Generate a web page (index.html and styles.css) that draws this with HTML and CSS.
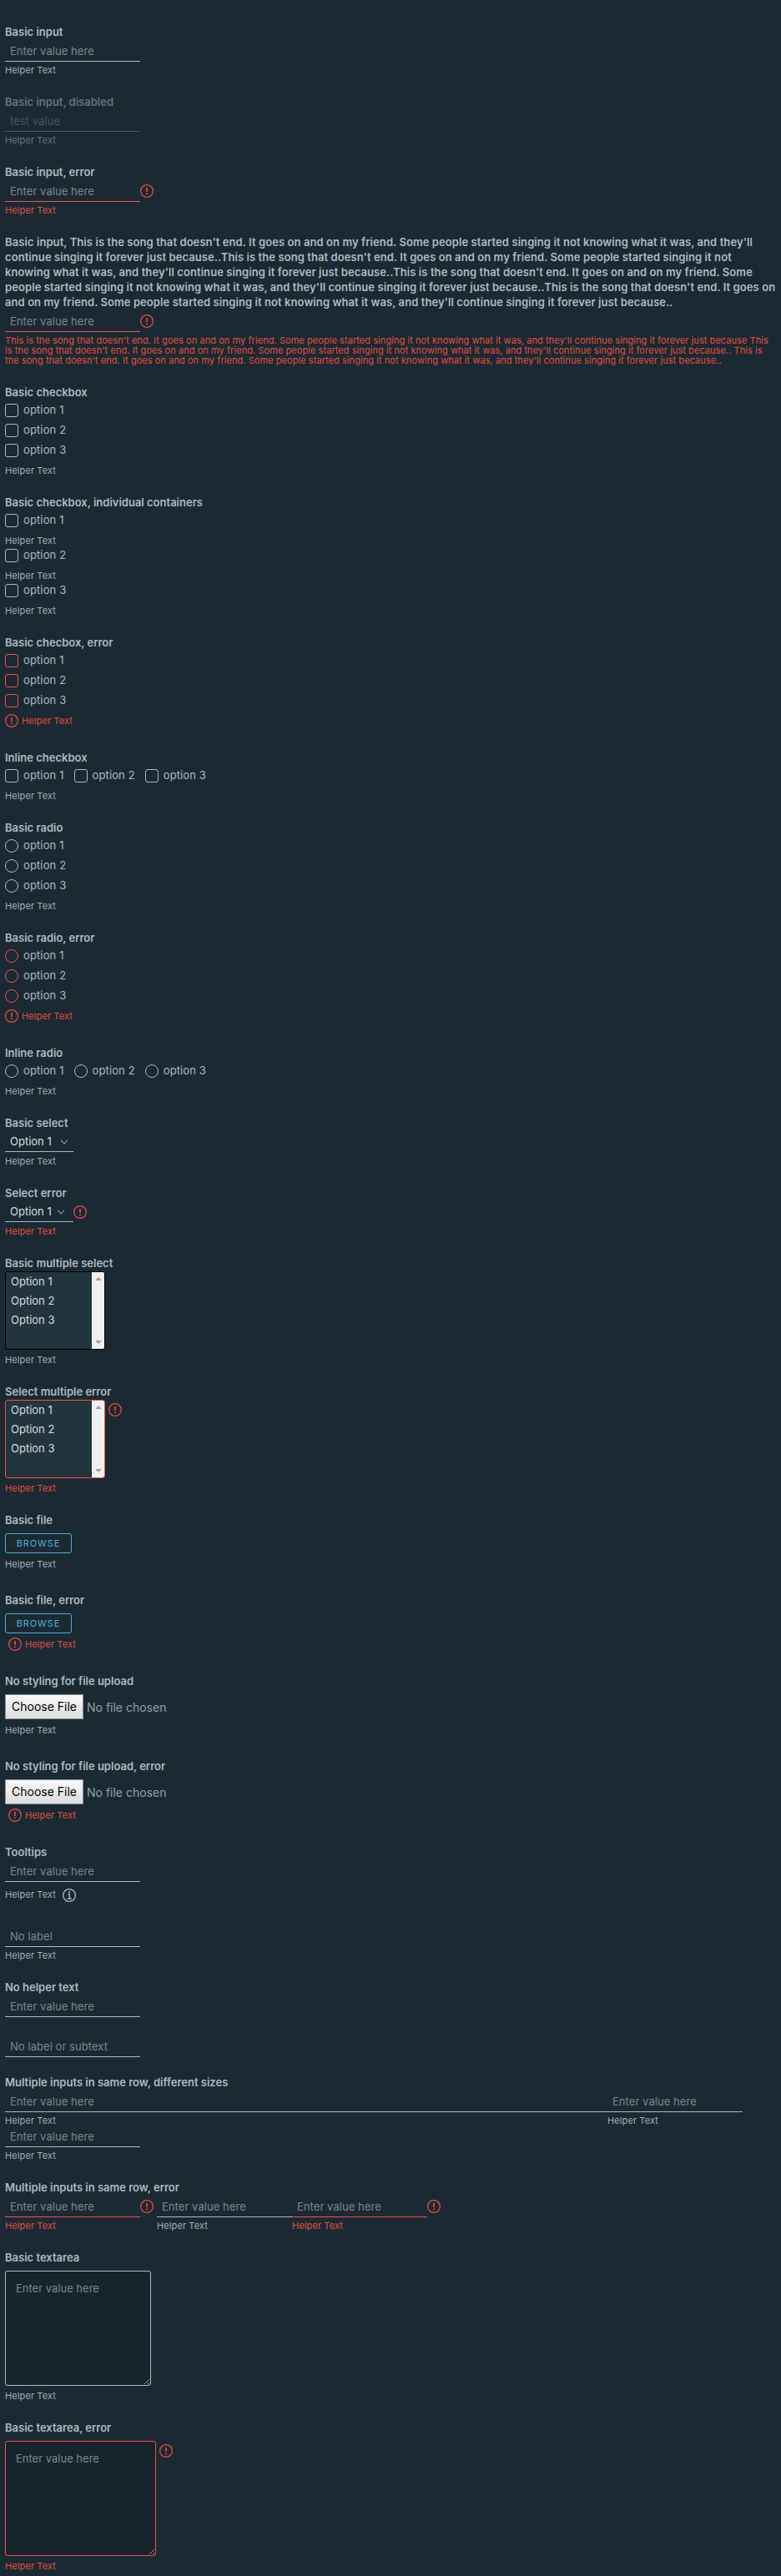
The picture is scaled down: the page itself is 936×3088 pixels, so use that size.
FILE: index.html
```html
<!DOCTYPE html>
<html lang="en">
<head>
<meta charset="utf-8">
<title>Forms</title>
<link rel="stylesheet" href="styles.css">
</head>
<body>
<svg width="0" height="0" class="defs" aria-hidden="true">
  <symbol id="err" viewBox="0 0 16 16"><circle cx="8" cy="8" r="7.35" fill="none" stroke="currentColor" stroke-width="1.3"/><path d="M8 4v5.1M8 10.6v1.6" stroke="currentColor" stroke-width="1.7" fill="none"/></symbol>
  <symbol id="info" viewBox="0 0 16 16"><circle cx="8" cy="8" r="7.35" fill="none" stroke="currentColor" stroke-width="1.3"/><path d="M6.2 6.9h2.2v5M5.7 12h5" stroke="currentColor" stroke-width="1.3" fill="none"/><circle cx="8" cy="4.3" r="1.1" fill="currentColor"/></symbol>
  <symbol id="caret" viewBox="0 0 10 6"><path d="M1 .8l4 4 4-4" stroke="currentColor" stroke-width="1.2" fill="none"/></symbol>
</svg>
<form class="form">
  <section class="group">
    <label class="label">Basic input</label>
    <div class="control"><input class="input" placeholder="Enter value here"></div>
    <div class="helper">Helper Text</div>
  </section>
  <section class="group disabled">
    <label class="label">Basic input, disabled</label>
    <div class="control"><input class="input" value="test value" disabled></div>
    <div class="helper">Helper Text</div>
  </section>
  <section class="group error">
    <label class="label">Basic input, error</label>
    <div class="control"><input class="input" placeholder="Enter value here"><svg class="icon"><use href="#err"/></svg></div>
    <div class="helper">Helper Text</div>
  </section>
  <section class="group error">
    <label class="label long">
      <span>Basic input, This is the song that doesn't end. It goes on and on my friend. Some people started singing it not knowing what it was, and they'll</span>
      <span>continue singing it forever just because..This is the song that doesn't end. It goes on and on my friend. Some people started singing it not</span>
      <span>knowing what it was, and they'll continue singing it forever just because..This is the song that doesn't end. It goes on and on my friend. Some</span>
      <span>people started singing it not knowing what it was, and they'll continue singing it forever just because..This is the song that doesn't end. It goes on</span>
      <span>and on my friend. Some people started singing it not knowing what it was, and they'll continue singing it forever just because..</span>
    </label>
    <div class="control"><input class="input" placeholder="Enter value here"><svg class="icon"><use href="#err"/></svg></div>
    <div class="helper long">
      <span>This is the song that doesn't end. It goes on and on my friend. Some people started singing it not knowing what it was, and they'll continue singing it forever just because This</span>
      <span>is the song that doesn't end. It goes on and on my friend. Some people started singing it not knowing what it was, and they'll continue singing it forever just because.. This is</span>
      <span>the song that doesn't end. It goes on and on my friend. Some people started singing it not knowing what it was, and they'll continue singing it forever just because..</span>
    </div>
  </section>

  <section class="group">
    <div class="label">Basic checkbox</div>
    <div class="options">
      <label class="option"><i class="box"></i>option 1</label>
      <label class="option"><i class="box"></i>option 2</label>
      <label class="option"><i class="box"></i>option 3</label>
    </div>
    <div class="helper">Helper Text</div>
  </section>
  <section class="group">
    <div class="label">Basic checkbox, individual containers</div>
    <div class="options"><label class="option"><i class="box"></i>option 1</label></div>
    <div class="helper">Helper Text</div>
    <div class="options"><label class="option"><i class="box"></i>option 2</label></div>
    <div class="helper">Helper Text</div>
    <div class="options"><label class="option"><i class="box"></i>option 3</label></div>
    <div class="helper">Helper Text</div>
  </section>
  <section class="group error">
    <div class="label">Basic checbox, error</div>
    <div class="options">
      <label class="option"><i class="box"></i>option 1</label>
      <label class="option"><i class="box"></i>option 2</label>
      <label class="option"><i class="box"></i>option 3</label>
    </div>
    <div class="helper with-icon"><svg class="icon"><use href="#err"/></svg>Helper Text</div>
  </section>
  <section class="group">
    <div class="label">Inline checkbox</div>
    <div class="options inline">
      <label class="option"><i class="box"></i>option 1</label>
      <label class="option"><i class="box"></i>option 2</label>
      <label class="option"><i class="box"></i>option 3</label>
    </div>
    <div class="helper">Helper Text</div>
  </section>
  <section class="group">
    <div class="label">Basic radio</div>
    <div class="options">
      <label class="option"><i class="box radio"></i>option 1</label>
      <label class="option"><i class="box radio"></i>option 2</label>
      <label class="option"><i class="box radio"></i>option 3</label>
    </div>
    <div class="helper">Helper Text</div>
  </section>
  <section class="group error">
    <div class="label">Basic radio, error</div>
    <div class="options">
      <label class="option"><i class="box radio"></i>option 1</label>
      <label class="option"><i class="box radio"></i>option 2</label>
      <label class="option"><i class="box radio"></i>option 3</label>
    </div>
    <div class="helper with-icon"><svg class="icon"><use href="#err"/></svg>Helper Text</div>
  </section>
  <section class="group">
    <div class="label">Inline radio</div>
    <div class="options inline">
      <label class="option"><i class="box radio"></i>option 1</label>
      <label class="option"><i class="box radio"></i>option 2</label>
      <label class="option"><i class="box radio"></i>option 3</label>
    </div>
    <div class="helper">Helper Text</div>
  </section>

  <section class="group">
    <div class="label">Basic select</div>
    <div class="select-row"><div class="select"><span>Option 1</span><svg class="caret"><use href="#caret"/></svg></div></div>
    <div class="helper after-select">Helper Text</div>
  </section>
  <section class="group error">
    <div class="label">Select error</div>
    <div class="select-row"><div class="select tight"><span>Option 1</span><svg class="caret"><use href="#caret"/></svg></div><svg class="icon"><use href="#err"/></svg></div>
    <div class="helper after-select">Helper Text</div>
  </section>
  <section class="group">
    <div class="label">Basic multiple select</div>
    <div class="multi-row">
      <div class="multi">
        <div class="multi-list"><span>Option 1</span><span>Option 2</span><span>Option 3</span></div>
        <div class="scroll"><i class="up"></i><i class="down"></i></div>
      </div>
    </div>
    <div class="helper after-box">Helper Text</div>
  </section>
  <section class="group error">
    <div class="label">Select multiple error</div>
    <div class="multi-row">
      <div class="multi">
        <div class="multi-list"><span>Option 1</span><span>Option 2</span><span>Option 3</span></div>
        <div class="scroll"><i class="up"></i><i class="down"></i></div>
      </div>
      <svg class="icon"><use href="#err"/></svg>
    </div>
    <div class="helper after-box">Helper Text</div>
  </section>

  <section class="group file">
    <div class="label">Basic file</div>
    <button type="button" class="browse">BROWSE</button>
    <div class="helper">Helper Text</div>
  </section>
  <section class="group file error">
    <div class="label">Basic file, error</div>
    <button type="button" class="browse">BROWSE</button>
    <div class="helper with-icon"><svg class="icon"><use href="#err"/></svg>Helper Text</div>
  </section>
  <section class="group file">
    <div class="label">No styling for file upload</div>
    <div class="native"><button type="button" class="choose">Choose File</button><span class="chosen">No file chosen</span></div>
    <div class="helper">Helper Text</div>
  </section>
  <section class="group file error">
    <div class="label">No styling for file upload, error</div>
    <div class="native"><button type="button" class="choose">Choose File</button><span class="chosen">No file chosen</span></div>
    <div class="helper with-icon"><svg class="icon"><use href="#err"/></svg>Helper Text</div>
  </section>

  <section class="group tooltip-group">
    <label class="label">Tooltips</label>
    <div class="control"><input class="input" placeholder="Enter value here"></div>
    <div class="helper-row"><span class="helper-text">Helper Text</span><svg class="icon"><use href="#info"/></svg></div>
  </section>
  <section class="group">
    <div class="control"><input class="input" placeholder="No label"></div>
    <div class="helper">Helper Text</div>
  </section>
  <section class="group">
    <label class="label">No helper text</label>
    <div class="control"><input class="input" placeholder="Enter value here"></div>
  </section>
  <section class="group no-label">
    <div class="control"><input class="input" placeholder="No label or subtext"></div>
  </section>
  <section class="group after-bare">
    <div class="label">Multiple inputs in same row, different sizes</div>
    <div class="row sizes">
      <div class="cell wide"><div class="control"><input class="input" placeholder="Enter value here"></div><div class="helper">Helper Text</div></div>
      <div class="cell"><div class="control"><input class="input" placeholder="Enter value here"></div><div class="helper">Helper Text</div></div>
      <div class="cell"><div class="control"><input class="input" placeholder="Enter value here"></div><div class="helper">Helper Text</div></div>
    </div>
  </section>
  <section class="group">
    <div class="label">Multiple inputs in same row, error</div>
    <div class="row">
      <div class="cell error spaced"><div class="control"><input class="input" placeholder="Enter value here"><svg class="icon"><use href="#err"/></svg></div><div class="helper">Helper Text</div></div>
      <div class="cell"><div class="control"><input class="input" placeholder="Enter value here"></div><div class="helper">Helper Text</div></div>
      <div class="cell error"><div class="control"><input class="input" placeholder="Enter value here"><svg class="icon"><use href="#err"/></svg></div><div class="helper">Helper Text</div></div>
    </div>
  </section>
  <section class="group">
    <label class="label">Basic textarea</label>
    <div class="area-row"><textarea class="area" placeholder="Enter value here"></textarea></div>
    <div class="helper after-box">Helper Text</div>
  </section>
  <section class="group error">
    <label class="label">Basic textarea, error</label>
    <div class="area-row"><textarea class="area" placeholder="Enter value here"></textarea><svg class="icon"><use href="#err"/></svg></div>
    <div class="helper after-box">Helper Text</div>
  </section>
</form>
</body>
</html>
```
FILE: styles.css
```css
* { box-sizing: border-box; }

body {
  margin: 0;
  padding: 6px;
  background: #1b2a32;
  color: #acbac3;
  font-family: Inter, "Open Sans", sans-serif;
  font-size: 13px;
}

.defs { position: absolute; }
.form { display: flex; flex-direction: column; }
.group { margin-top: 24px; }

.label {
  display: block;
  height: 18px;
  line-height: 16px;
  font-weight: 600;
  white-space: nowrap;
}
.label.long { height: 90px; line-height: 18px; letter-spacing: 0.08px; }
.label.long span, .helper.long span { display: block; white-space: nowrap; }
.label.long span { height: 18px; line-height: 16px; }

.control { display: flex; height: 24px; margin-top: 2px; }
.input {
  width: 162px;
  height: 24px;
  margin: 0;
  padding: 0 6px 2px;
  border: 0;
  border-bottom: 1px solid #acbac3;
  border-radius: 0;
  background: none;
  color: #acbac3;
  font: inherit;
  letter-spacing: 0.06px;
  outline: none;
}
::placeholder { color: #7b868c; opacity: 1; }

.helper {
  height: 12px;
  margin-top: 4px;
  line-height: 12px;
  font-size: 11px;
  letter-spacing: 0.1px;
  color: #a1afb7;
}
.helper.long { height: auto; letter-spacing: 0.06px; }
.icon { flex: none; display: block; width: 16px; height: 16px; color: #e24a44; }
.control .icon { margin-top: 3px; }

.error .input { border-color: #f54f47; }
.error .helper { color: #e24a44; }
.disabled .label, .disabled .helper { color: #64727a; }
.disabled .input { color: #46545b; border-color: #46545b; }

/* checkboxes and radios */
.options { display: flex; flex-direction: column; gap: 8px; padding-top: 4px; }
.options.inline { flex-direction: row; gap: 12px; }
.option {
  display: flex;
  height: 16px;
  gap: 6px;
  line-height: 15px;
  letter-spacing: 0.12px;
  white-space: nowrap;
}
.box { width: 16px; height: 16px; border: 1px solid #acbac3; border-radius: 3px; }
.radio { border-radius: 50%; }
.error .box { border-color: #f54f47; }
.options + .helper { margin-top: 10px; }
.helper.with-icon { display: flex; gap: 4px; height: 16px; line-height: 16px; }
.options + .helper.with-icon { margin: 8px 0 28px; }
.group:has(.options + .with-icon) + .group { margin-top: 0; }

/* selects */
.select-row { display: flex; height: 24px; margin-top: 1px; }
.select {
  display: flex;
  justify-content: space-between;
  width: 82px;
  padding: 0 6px;
  border-bottom: 1px solid #acbac3;
  color: #d5dde1;
  line-height: 23px;
}
.tight { padding-right: 10px; }
.caret { width: 10px; height: 6px; margin-top: 9px; color: #8d989e; }
.select-row .icon { margin-top: 4px; }
.helper.after-select { margin-top: 5px; }
.multi-row { display: flex; gap: 4px; }
.multi {
  display: flex;
  width: 120px;
  height: 94px;
  border: 1px solid #000;
  border-radius: 3px;
  background: #22343c;
  color: #d5dde1;
  overflow: hidden;
}
.multi-list { flex: 1; display: flex; flex-direction: column; padding-left: 6px; line-height: 23px; }
.scroll {
  display: flex;
  flex-direction: column;
  align-items: center;
  justify-content: space-between;
  width: 15px;
  padding: 6px 0;
  background: #f0f0f0;
}
.up, .down { border: 4px solid transparent; border-top-width: 0; border-bottom: 4px solid #a3a3a3; }
.down { border-top: 4px solid #a3a3a3; border-bottom-width: 0; }
.multi-row .icon, .area-row .icon { margin-top: 4px; }
.error .multi { border-color: #f54f47; }
.helper.after-box { margin-top: 6px; }

/* file inputs */
.browse {
  display: block;
  width: 80px;
  height: 24px;
  margin: 6px 0 0;
  padding: 0;
  border: 1px solid #49afd9;
  border-radius: 3px;
  background: none;
  color: #49afd9;
  font: 400 11px/22px Inter, sans-serif;
  letter-spacing: 0.9px;
}
.file .helper { margin: 7px 0 5px; }
.file .helper.with-icon { margin: 5px 0 4px 4px; }
.native { display: flex; align-items: center; gap: 4px; height: 30px; margin-top: 6px; }
.choose {
  width: 94px;
  height: 30px;
  padding: 0;
  border: 1px solid #8f8f8f;
  border-radius: 0;
  background: linear-gradient(#f8f8f8, #dddddd);
  color: #000;
  font: 14px/28px Inter, sans-serif;
}
.chosen { font-size: 14px; color: #93a0a8; }

.tooltip-group { height: 72px; }
.helper-row { display: flex; gap: 8px; margin-top: 8px; }
.helper-text { font-size: 11px; line-height: 14px; letter-spacing: 0.1px; color: #a1afb7; }
.helper-row .icon { color: #acbac3; }

/* rows of inputs */
.row { display: flex; }
.sizes { flex-wrap: wrap; }
.wide, .wide .input { width: 722px; }
.spaced { margin-right: 4px; }
.no-label .control { margin-top: 0; }
.after-bare { margin-top: 22px; }

.area-row { display: flex; gap: 4px; margin-top: 6px; }
.area {
  display: block;
  width: 175px;
  height: 138px;
  margin: 0;
  padding: 11px 12px;
  border: 1px solid #acbac3;
  border-radius: 3px;
  background: #17242b;
  color: #acbac3;
  font: inherit;
  line-height: 18px;
  outline: none;
}
.error .area { width: 181px; border-color: #f54f47; }
```
